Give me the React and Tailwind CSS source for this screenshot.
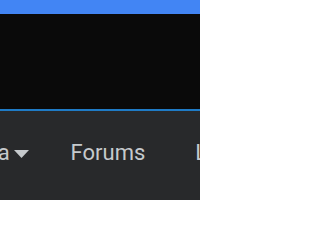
import React from "react";

function Caret() {
  return (
    <svg width="15" height="8" viewBox="0 0 15 8" className="ml-[4px] mt-[2px]">
      <polygon points="0,0 15,0 7.5,8" fill="#c6cacd" />
    </svg>
  );
}

export default function App() {
  return (
    <div className="w-[200px] h-[200px] overflow-hidden bg-[#28292b] font-['Roboto',sans-serif]">
      {/* top bar */}
      <div className="h-[14px] bg-[#4285f4]" />
      {/* header */}
      <div className="h-[97px] bg-[#0a0a0a] border-b-2 border-[#1f7bc6]" />
      {/* nav */}
      <nav className="flex items-center pt-[29px] whitespace-nowrap text-[22px] leading-[26px] text-[#c6cacd]">
        <div className="flex items-center shrink-0 -ml-[51px]">
          <span>Media</span>
          <Caret />
        </div>
        <span className="shrink-0 ml-[42px]">Forums</span>
        <span className="shrink-0 ml-[50px]">Links</span>
      </nav>
    </div>
  );
}
